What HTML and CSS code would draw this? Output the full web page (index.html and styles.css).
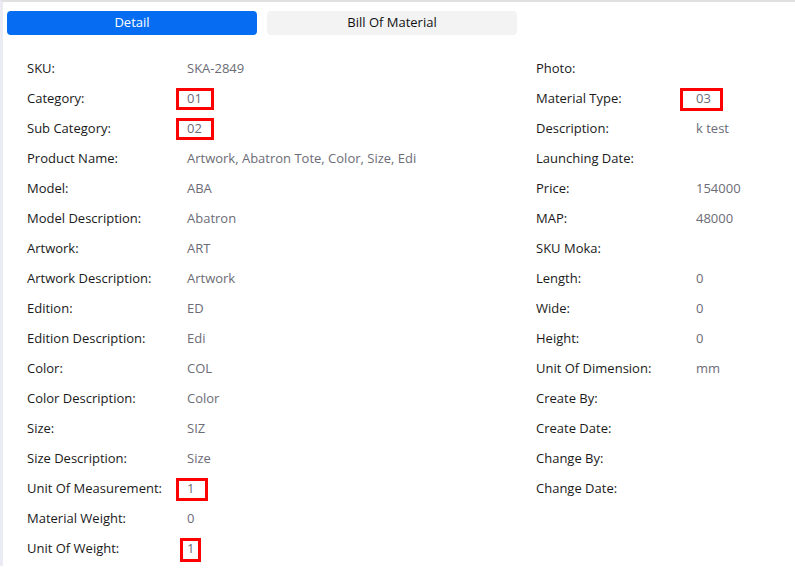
FILE: index.html
```html
<!DOCTYPE html>
<html>
<head>
<meta charset="utf-8">
<link rel="stylesheet" href="styles.css">
</head>
<body>
<div class="page">
  <div class="tabs">
    <div class="tab active">Detail</div>
    <div class="tab">Bill Of Material</div>
  </div>
  <div class="grid">
    <div class="col">
      <div class="row"><span class="label">SKU:</span><span class="value">SKA-2849</span></div>
      <div class="row"><span class="label">Category:</span><span class="value marked"><span class="hl hl-cat"></span>01</span></div>
      <div class="row"><span class="label">Sub Category:</span><span class="value marked"><span class="hl hl-sub"></span>02</span></div>
      <div class="row"><span class="label">Product Name:</span><span class="value">Artwork, Abatron Tote, Color, Size, Edi</span></div>
      <div class="row"><span class="label">Model:</span><span class="value">ABA</span></div>
      <div class="row"><span class="label">Model Description:</span><span class="value">Abatron</span></div>
      <div class="row"><span class="label">Artwork:</span><span class="value">ART</span></div>
      <div class="row"><span class="label">Artwork Description:</span><span class="value">Artwork</span></div>
      <div class="row"><span class="label">Edition:</span><span class="value">ED</span></div>
      <div class="row"><span class="label">Edition Description:</span><span class="value">Edi</span></div>
      <div class="row"><span class="label">Color:</span><span class="value">COL</span></div>
      <div class="row"><span class="label">Color Description:</span><span class="value">Color</span></div>
      <div class="row"><span class="label">Size:</span><span class="value">SIZ</span></div>
      <div class="row"><span class="label">Size Description:</span><span class="value">Size</span></div>
      <div class="row"><span class="label">Unit Of Measurement:</span><span class="value marked"><span class="hl hl-uom"></span>1</span></div>
      <div class="row"><span class="label">Material Weight:</span><span class="value">0</span></div>
      <div class="row"><span class="label">Unit Of Weight:</span><span class="value marked"><span class="hl hl-uow"></span>1</span></div>
    </div>
    <div class="col">
      <div class="row"><span class="label">Photo:</span><span class="value"></span></div>
      <div class="row"><span class="label">Material Type:</span><span class="value marked"><span class="hl hl-mt"></span>03</span></div>
      <div class="row"><span class="label">Description:</span><span class="value">k test</span></div>
      <div class="row"><span class="label">Launching Date:</span><span class="value"></span></div>
      <div class="row"><span class="label">Price:</span><span class="value">154000</span></div>
      <div class="row"><span class="label">MAP:</span><span class="value">48000</span></div>
      <div class="row"><span class="label">SKU Moka:</span><span class="value"></span></div>
      <div class="row"><span class="label">Length:</span><span class="value">0</span></div>
      <div class="row"><span class="label">Wide:</span><span class="value">0</span></div>
      <div class="row"><span class="label">Height:</span><span class="value">0</span></div>
      <div class="row"><span class="label">Unit Of Dimension:</span><span class="value">mm</span></div>
      <div class="row"><span class="label">Create By:</span><span class="value"></span></div>
      <div class="row"><span class="label">Create Date:</span><span class="value"></span></div>
      <div class="row"><span class="label">Change By:</span><span class="value"></span></div>
      <div class="row"><span class="label">Change Date:</span><span class="value"></span></div>
    </div>
  </div>
</div>
</body>
</html>
```
FILE: styles.css
```css
html, body {
  margin: 0;
  padding: 0;
  background: #fff;
}
body {
  font-family: "Open Sans", "Noto Sans", "Liberation Sans", sans-serif;
  font-size: 13px;
  color: #222;
}
.page {
  border-left: 3px solid #ebebf3;
  border-top: 2px solid #e0e0e0;
  min-height: 566px;
  box-sizing: border-box;
  padding: 9px 0 0 4px;
}
.tabs {
  display: flex;
  gap: 10px;
}
.tab {
  width: 250px;
  height: 24px;
  line-height: 22px;
  text-align: center;
  background: #f3f3f3;
  color: #111;
  border-radius: 4px;
}
.tab.active {
  background: #066df2;
  color: #fff;
}
.grid {
  display: grid;
  grid-template-columns: 509px 1fr;
  padding: 18px 0 0 20px;
}
.row {
  display: flex;
  height: 30px;
  line-height: 30px;
}
.label {
  width: 160px;
  flex: none;
  color: #1a1a1a;
}
.value {
  color: #6c6c76;
  white-space: nowrap;
}
.marked {
  position: relative;
}
.hl {
  position: absolute;
  border: 3px solid #ff0000;
  box-sizing: border-box;
}
.hl-cat { left: -11px; top: 5px; width: 38px; height: 22px; }
.hl-sub { left: -11px; top: 5px; width: 38px; height: 22px; }
.hl-mt { left: -16px; top: 5px; width: 43px; height: 23px; }
.hl-uom { left: -11px; top: 5px; width: 32px; height: 23px; }
.hl-uow { left: -7px; top: 5px; width: 21px; height: 24px; }
```
